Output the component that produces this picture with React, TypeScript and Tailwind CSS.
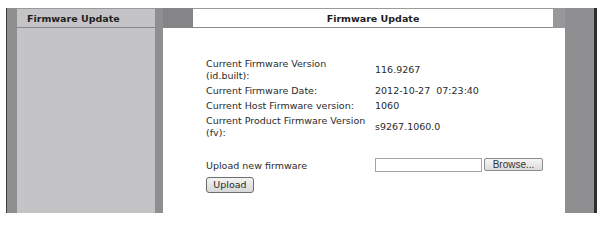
import React from "react";

const font = { fontFamily: '"DejaVu Sans", Verdana, sans-serif' };

export default function App() {
  const rows: [string, string][] = [
    ["Current Firmware Version (id.built):", "116.9267"],
    ["Current Firmware Date:", "2012-10-27  07:23:40"],
    ["Current Host Firmware version:", "1060"],
    ["Current Product Firmware Version (fv):", "s9267.1060.0"],
  ];
  return (
    <div
      className="w-[598px] h-[226px] bg-white pt-[8px] pl-[6px] text-[#2a2a2a] overflow-hidden"
      style={font}
    >
      <div className="flex h-[205px]">
        <div className="w-[1px] bg-[#3c3c3c]" />
        <div className="w-[10px] bg-[#8f8f91]" />
        <div className="w-[138px] bg-[#c4c4c6] flex flex-col">
          <div className="h-[20px] border-t border-t-[#9a9a9a] border-b border-b-[#8a8a8a] pl-[10px] pt-[1px] text-[9.5px] leading-[17px] font-bold text-[#1e1e1e]">
            Firmware Update
          </div>
        </div>
        <div className="w-[8px] bg-[#8f8f91]" />
        <div className="w-[402px] flex flex-col bg-white">
          <div className="flex h-[20px]">
            <div className="w-[30px] bg-[#858587]" />
            <div className="w-[360px] border-t border-t-[#9a9a9a] border-b border-b-[#8a8a8a] bg-white text-center pt-[1px] text-[9.5px] leading-[17px] font-bold text-[#1e1e1e]">
              Firmware Update
            </div>
            <div className="w-[12px] bg-[#98989a]" />
          </div>
          <div className="pl-[43px] pt-[28px] text-[9.5px] leading-[12px]">
            <div className="grid grid-cols-[169px_1fr]">
              {rows.map(([k, v]) => (
                <React.Fragment key={k}>
                  <div className="py-[1.5px] pr-[4px]">{k}</div>
                  <div className="py-[1.5px] flex items-center whitespace-pre">{v}</div>
                </React.Fragment>
              ))}
            </div>
            <div className="grid grid-cols-[169px_1fr] mt-[17px] items-center">
              <div className="pt-[3px]">Upload new firmware</div>
              <div className="flex items-center gap-[2px]">
                <div className="w-[107px] h-[14px] border border-[#a5a5a5] bg-white" />
                <div
                  className="w-[59px] h-[13px] rounded-[2px] border border-[#8c8c8c] bg-gradient-to-b from-[#f6f6f6] to-[#dcdcdc] text-[10px] leading-[11px] text-center text-[#333]"
                  style={{ fontFamily: '"Liberation Sans", Arial, sans-serif' }}
                >
                  Browse...
                </div>
              </div>
            </div>
            <div className="mt-[5px]">
              <div className="inline-block w-[48px] h-[16px] rounded-[3px] border border-[#6e6e6e] bg-gradient-to-b from-[#f4f4f4] to-[#d8d8d8] text-center text-[9.5px] leading-[14px]">
                Upload
              </div>
            </div>
          </div>
        </div>
        <div className="w-[29px] bg-[#8f8f91]" />
        <div className="w-[3px] bg-[#2e2e2e]" />
      </div>
    </div>
  );
}
